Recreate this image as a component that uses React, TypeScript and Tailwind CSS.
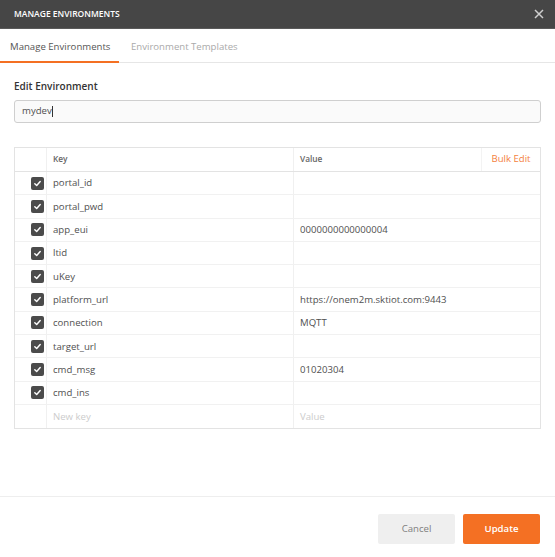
import React from "react";

const rows: { k: string; v: string }[] = [
  { k: "portal_id", v: "" },
  { k: "portal_pwd", v: "" },
  { k: "app_eui", v: "0000000000000004" },
  { k: "ltid", v: "" },
  { k: "uKey", v: "" },
  { k: "platform_url", v: "https://onem2m.sktiot.com:9443" },
  { k: "connection", v: "MQTT" },
  { k: "target_url", v: "" },
  { k: "cmd_msg", v: "01020304" },
  { k: "cmd_ins", v: "" },
];

function Check() {
  return (
    <div className="w-[13px] h-[13px] rounded-[2px] bg-[#4b4b4b] flex items-center justify-center">
      <svg width="9" height="9" viewBox="0 0 10 10">
        <path d="M2 5.2 L4.1 7.2 L8 2.8" fill="none" stroke="#fff" strokeWidth="1.6" strokeLinecap="round" strokeLinejoin="round" />
      </svg>
    </div>
  );
}

export default function App() {
  return (
    <div
      className="w-[555px] h-[557px] bg-white flex flex-col text-[#505050]"
      style={{ fontFamily: '"Open Sans", "Noto Sans", sans-serif' }}
    >
      <div className="h-[29px] bg-[#464646] flex items-center justify-between pl-[14px] pr-[11px] border-b border-[#5a5a5a]">
        <span className="text-white text-[8.5px] font-semibold">MANAGE ENVIRONMENTS</span>
        <svg width="10" height="10" viewBox="0 0 10 10">
          <path d="M1 1 L9 9 M9 1 L1 9" stroke="#cfcfcf" strokeWidth="1.5" />
        </svg>
      </div>

      <div className="h-[34px] flex">
        <div className="w-[119px] flex items-center pl-[10px] text-[9.6px] text-[#555] border-b-[2px] border-[#f47023] pt-[4px]">
          Manage Environments
        </div>
        <div className="flex-1 flex items-center border-b border-[#e6e6e6] pl-[12px] text-[9.6px] text-[#aaaaaa] pt-[3px]">
          Environment Templates
        </div>
      </div>

      <div className="px-[14px]">
        <div className="mt-[15px] text-[10px] font-semibold text-[#333] leading-[16px]">Edit Environment</div>
        <div className="mt-[6px] h-[23px] border border-[#cfcfcf] rounded-[3px] bg-[#fafafa] flex items-center px-[7px] text-[9.6px] text-[#505050]">
          mydev<span className="w-px h-[11px] bg-[#333]" />
        </div>

        <div className="mt-[24px] border border-[#e3e3e3]">
          <div className="grid grid-cols-[31px_247px_1fr] h-[24px] border-b border-[#e3e3e3] text-[8.3px] font-semibold text-[#666]">
            <div />
            <div className="border-l border-[#f0f0f0] flex items-center pl-[6px]">Key</div>
            <div className="border-l border-[#f0f0f0] flex items-center">
              <span className="flex-1 pl-[6px]">Value</span>
              <div className="w-[59px] h-full border-l border-[#f3f3f3] flex items-center justify-center text-[9.6px] font-normal text-[#f47f3e]">
                Bulk Edit
              </div>
            </div>
          </div>
          {rows.map((r) => (
            <div key={r.k} className="grid grid-cols-[31px_247px_1fr] h-[23.3px] border-b border-[#f1f1f1] text-[9.6px] text-[#505050]">
              <div className="flex items-center justify-end pr-[2px]">
                <Check />
              </div>
              <div className="border-l border-[#f0f0f0] flex items-center pl-[6px] pt-[1px]">{r.k}</div>
              <div className="border-l border-[#f0f0f0] flex items-center pl-[6px] pt-[1px]">{r.v}</div>
            </div>
          ))}
          <div className="grid grid-cols-[31px_247px_1fr] h-[23.3px] text-[9.6px] text-[#cccccc]">
            <div />
            <div className="border-l border-[#f0f0f0] flex items-center pl-[6px] pt-[1px]">New key</div>
            <div className="border-l border-[#f0f0f0] flex items-center pl-[6px] pt-[1px]">Value</div>
          </div>
        </div>
      </div>

      <div className="flex-1" />

      <div className="border-t border-[#eeeeee] pt-[17px] pb-[13px] pr-[15px] flex justify-end gap-[8px]">
        <button className="w-[77px] h-[30px] rounded-[2px] bg-[#efefef] text-[9.6px] text-[#808080]">Cancel</button>
        <button className="w-[77px] h-[30px] rounded-[2px] bg-[#f47023] text-[9.6px] font-semibold text-white">Update</button>
      </div>
    </div>
  );
}
